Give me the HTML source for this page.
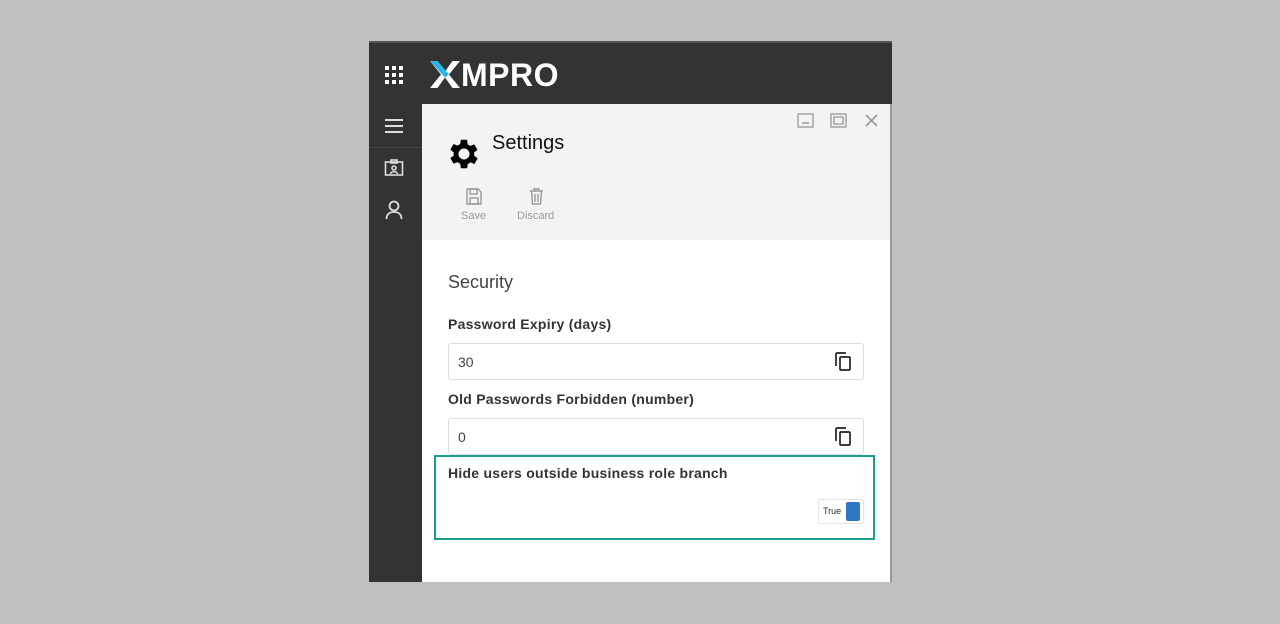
<!DOCTYPE html>
<html><head><style>
*{margin:0;padding:0;box-sizing:border-box}
body{width:1280px;height:624px;background:#c0c0c0;position:relative;font-family:"Liberation Sans",Arial,sans-serif;overflow:hidden}
.abs{position:absolute}
.lb{font-size:14px;font-weight:bold;color:#333;letter-spacing:0.25px}
</style></head><body>
<div class="abs" style="left:369px;top:41px;width:523px;height:2px;background:#555"></div>
<div class="abs" style="left:369px;top:43px;width:523px;height:62px;background:#333"></div>
<div class="abs" style="left:369px;top:104px;width:53px;height:478px;background:#333"></div>
<svg class="abs" style="left:384px;top:65px" width="20" height="20" viewBox="0 0 20 20" fill="#fff">
<rect x="1" y="1" width="4" height="4"/><rect x="8" y="1" width="4" height="4"/><rect x="15" y="1" width="4" height="4"/>
<rect x="1" y="8" width="4" height="4"/><rect x="8" y="8" width="4" height="4"/><rect x="15" y="8" width="4" height="4"/>
<rect x="1" y="15" width="4" height="4"/><rect x="8" y="15" width="4" height="4"/><rect x="15" y="15" width="4" height="4"/></svg>
<svg class="abs" style="left:429px;top:61px" width="32" height="27" viewBox="0 0 32 27"><path d="M1 0h7.5l7.5 10.5 7.5-10.5H31L20 13.5 31 27h-7.5L16 16.5 8.5 27H1l11-13.5z" fill="#fff"/><path d="M1 0h7.5L20 13.5l-4 3z" fill="#29b6e8"/></svg>
<div class="abs" style="left:461px;top:57px;color:#fff;font-size:32px;font-weight:bold;letter-spacing:0.5px">MPRO</div>
<svg class="abs" style="left:384px;top:118px" width="20" height="16"><path d="M1 2h18M1 8h18M1 14h18" stroke="#ddd" stroke-width="2"/></svg>
<div class="abs" style="left:369px;top:147px;width:53px;height:1px;background:#444"></div>
<svg class="abs" style="left:384px;top:159px" width="20" height="18" viewBox="0 0 20 18" fill="none" stroke="#ddd" stroke-width="1.6"><rect x="1.5" y="3" width="17" height="13"/><rect x="7" y="1" width="6" height="3"/><circle cx="10" cy="9" r="2"/><path d="M6.5 15c0-3 7-3 7 0"/></svg>
<svg class="abs" style="left:385px;top:200px" width="18" height="20" viewBox="0 0 18 20" fill="none" stroke="#ddd" stroke-width="1.8"><circle cx="9" cy="6" r="4.5"/><path d="M1.5 19c0-5 3.5-7 7.5-7s7.5 2 7.5 7"/></svg>
<div class="abs" style="left:422px;top:104px;width:468px;height:478px;background:#fff"></div>
<div class="abs" style="left:890px;top:104px;width:2px;height:478px;background:#999"></div>
<div class="abs" style="left:422px;top:104px;width:468px;height:136px;background:#f3f3f3"></div>
<svg class="abs" style="left:797px;top:113px" width="18" height="15"><rect x="1" y="1" width="15" height="13" fill="none" stroke="#999" stroke-width="1.3"/><path d="M5 10h7" stroke="#999" stroke-width="1.5"/></svg>
<svg class="abs" style="left:830px;top:113px" width="18" height="15"><rect x="1" y="1" width="15" height="13" fill="none" stroke="#999" stroke-width="1.3"/><rect x="4" y="4" width="9" height="7" fill="none" stroke="#999" stroke-width="1.3"/></svg>
<svg class="abs" style="left:864px;top:113px" width="15" height="15"><path d="M2 2l11 11M13 2L2 13" stroke="#999" stroke-width="1.6"/></svg>
<svg class="abs" style="left:445px;top:135px" width="38" height="38" viewBox="0 0 24 24"><path fill="#000" d="M19.4 13a7.5 7.5 0 000-2l2.1-1.6-2-3.5-2.5 1a7.7 7.7 0 00-1.7-1L15 3h-4l-.4 2.7a7.7 7.7 0 00-1.7 1l-2.5-1-2 3.5L6.5 11a7.5 7.5 0 000 2l-2.1 1.6 2 3.5 2.5-1a7.7 7.7 0 001.7 1L11 21h4l.4-2.7a7.7 7.7 0 001.7-1l2.5 1 2-3.5zM13 15.5a3.5 3.5 0 110-7 3.5 3.5 0 010 7z" transform="translate(-1 0)"/></svg>
<div class="abs" style="left:492px;top:132px;font-size:20px;color:#111">Settings</div>
<svg class="abs" style="left:466px;top:188px" width="16" height="17" viewBox="0 0 16 17" fill="none" stroke="#999" stroke-width="1.4"><path d="M1 1h11l3 3v12H1z"/><rect x="4" y="1" width="7" height="5"/><rect x="4" y="10" width="8" height="6"/></svg>
<div class="abs" style="left:461px;top:210px;font-size:11px;color:#999">Save</div>
<svg class="abs" style="left:529px;top:188px" width="15" height="17" viewBox="0 0 15 17" fill="none" stroke="#999" stroke-width="1.4"><path d="M1 3h13M5 3V1h5v2M2.5 3l1 13h8l1-13M6 6v8M9 6v8"/></svg>
<div class="abs" style="left:517px;top:210px;font-size:11px;color:#999">Discard</div>
<div class="abs" style="left:448px;top:272px;font-size:18px;color:#444">Security</div>
<div class="abs lb" style="left:448px;top:316px">Password Expiry (days)</div>
<div class="abs" style="left:448px;top:343px;width:416px;height:37px;border:1px solid #ddd;border-radius:3px"></div>
<div class="abs" style="left:458px;top:354px;font-size:14px;color:#444">30</div>
<div class="abs lb" style="left:448px;top:391px">Old Passwords Forbidden (number)</div>
<div class="abs" style="left:448px;top:418px;width:416px;height:37px;border:1px solid #ddd;border-radius:3px"></div>
<div class="abs" style="left:458px;top:429px;font-size:14px;color:#444">0</div>
<svg class="abs" style="left:833px;top:351px" width="20" height="21" viewBox="0 0 20 21" fill="none" stroke="#222" stroke-width="1.7"><path d="M3 15V3a1 1 0 011-1h9"/><rect x="7" y="6" width="10" height="13" rx="1"/></svg>
<svg class="abs" style="left:833px;top:426px" width="20" height="21" viewBox="0 0 20 21" fill="none" stroke="#222" stroke-width="1.7"><path d="M3 15V3a1 1 0 011-1h9"/><rect x="7" y="6" width="10" height="13" rx="1"/></svg>
<div class="abs" style="left:434px;top:455px;width:441px;height:85px;border:2px solid #1a9e8f"></div>
<div class="abs lb" style="left:448px;top:465px">Hide users outside business role branch</div>
<div class="abs" style="left:818px;top:499px;width:46px;height:25px;border:1px solid #e3e3e3;border-radius:2px;background:#fff"></div>
<div class="abs" style="left:823px;top:506px;font-size:9px;color:#333">True</div>
<div class="abs" style="left:846px;top:502px;width:14px;height:19px;background:#2f77c0;border-radius:2px"></div>
</body></html>
